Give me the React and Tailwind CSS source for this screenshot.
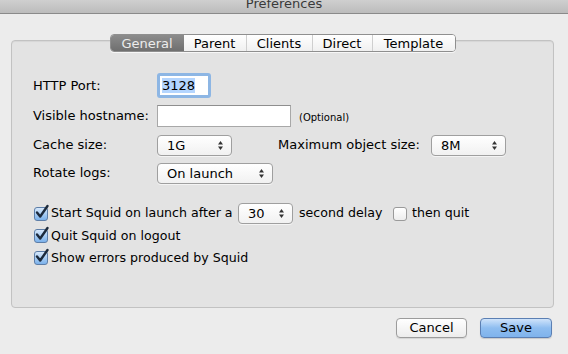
import React from 'react';

const font = { fontFamily: '"DejaVu Sans", "Liberation Sans", sans-serif' };

const Arrows = () => (
  <svg width="7" height="11" viewBox="0 0 7 11" className="shrink-0">
    <path d="M3.5 1 L6 4.5 L1 4.5 Z" fill="#333" />
    <path d="M3.5 10 L6 6.5 L1 6.5 Z" fill="#333" />
  </svg>
);

// popup button
const Popup = ({ value, width }) => (
  <div
    className={`flex items-center justify-between h-[21px] pl-[9px] pr-[7px] rounded-[4px] border border-[#9f9f9f] bg-gradient-to-b from-white to-[#f1f1f1] shadow-[0_1px_0_rgba(255,255,255,0.6)] ${width}`}
  >
    <span className="text-[13px] leading-none text-black">{value}</span>
    <Arrows />
  </div>
);

const Check = ({ checked }) => (
  <div className="relative w-[14px] h-[14px] shrink-0">
    {checked ? (
      <div className="w-[14px] h-[14px] rounded-[3px] border border-[#5d7ea8] bg-gradient-to-b from-[#d6e8fb] to-[#7bb1ea]" />
    ) : (
      <div className="w-[14px] h-[14px] rounded-[3px] border border-[#9a9a9a] bg-gradient-to-b from-white to-[#ededed]" />
    )}
    {checked && (
      <svg width="16" height="16" viewBox="0 0 16 16" className="absolute left-[0px] top-[-3px]">
        <path d="M3 8.5 L6.2 12.5 L13.5 2" fill="none" stroke="#1c2a3c" strokeWidth="2.4" strokeLinecap="round" strokeLinejoin="round" />
      </svg>
    )}
  </div>
);

const tabs = ['General', 'Parent', 'Clients', 'Direct', 'Template'];
const tabWidths = ['w-[73px]', 'w-[62px]', 'w-[66px]', 'w-[60px]', 'w-[83px]'];

export default function App() {
  return (
    <div className="w-[568px] h-[354px] bg-[#ececec] overflow-hidden text-black" style={font}>
      {/* title bar */}
      <div className="h-[14px] overflow-hidden border-b border-[#8a8a8a] bg-gradient-to-b from-[#cfcfcf] to-[#bcbcbc]">
        <div className="-mt-[4px] text-center text-[13px] leading-[16px] text-[#3a3a3a]">Preferences</div>
      </div>

      {/* group box */}
      <div className="ml-[11px] mr-[14px] mt-[26px] h-[268px] rounded-[4px] border border-[#c2c2c2] bg-[#e3e3e3] shadow-[inset_0_1px_1px_rgba(0,0,0,0.06)]">
        <div className="flex justify-center -mt-[7px]">
          <div className="flex h-[18px] rounded-[4px] border border-[#8f8f8f] bg-white overflow-hidden shadow-[0_1px_0_rgba(255,255,255,0.7)]">
            {tabs.map((t, i) => (
              <div
                key={t}
                className={`flex items-center justify-center text-[13px] leading-none ${tabWidths[i]} ${
                  i === 0
                    ? 'bg-gradient-to-b from-[#8c8c8c] to-[#6f6f6f] text-[#ececec]'
                    : 'bg-gradient-to-b from-white to-[#f0f0f0]'
                } ${i > 1 ? 'border-l border-[#cfcfcf]' : ''}`}
              >
                {t}
              </div>
            ))}
          </div>
        </div>

        <div className="pl-[21px] pt-[20px]">
          <div className="flex items-center h-[27px]">
            <span className="w-[124px] text-[13px]">HTTP Port:</span>
            <div className="flex items-center h-[25px] w-[54px] rounded-[3px] border-[3px] border-[#8db6e4] bg-white pl-[2px]">
              <span className="bg-[#b4d5fe] text-[13px] leading-[15px]">3128</span>
            </div>
          </div>

          <div className="flex items-center h-[30px] mt-[2px]">
            <span className="w-[124px] text-[13px]">Visible hostname:</span>
            <div className="h-[22px] w-[134px] border border-[#a8a8a8] border-t-[#8e8e8e] bg-white" />
            <span className="ml-[8px] text-[10px] mt-[2px]">(Optional)</span>
          </div>

          <div className="flex items-center h-[28px]">
            <span className="w-[124px] text-[13px]">Cache size:</span>
            <Popup value="1G" width="w-[75px]" />
            <span className="ml-[46px] w-[153px] text-[13px]">Maximum object size:</span>
            <Popup value="8M" width="w-[75px]" />
          </div>

          <div className="flex items-center h-[28px]">
            <span className="w-[124px] text-[13px]">Rotate logs:</span>
            <Popup value="On launch" width="w-[116px]" />
          </div>

          <div className="flex flex-col mt-[15px] pl-[1px] text-[12.6px]">
            <div className="flex items-center h-[23px]">
              <Check checked />
              <span className="ml-[3px] w-[180px] whitespace-nowrap">Start Squid on launch after a</span>
              <div className="ml-[7px]">
                <Popup value="30" width="w-[55px]" />
              </div>
              <span className="ml-[6px] w-[82px] whitespace-nowrap">second delay</span>
              <div className="ml-[12px]"><Check /></div>
              <span className="ml-[5px] whitespace-nowrap">then quit</span>
            </div>
            <div className="flex items-center h-[22px]">
              <Check checked />
              <span className="ml-[3px]">Quit Squid on logout</span>
            </div>
            <div className="flex items-center h-[22px]">
              <Check checked />
              <span className="ml-[3px]">Show errors produced by Squid</span>
            </div>
          </div>
        </div>
      </div>

      {/* buttons */}
      <div className="flex justify-end gap-[13px] mr-[16px] mt-[10px]">
        <div className="flex items-center justify-center w-[71px] h-[20px] rounded-[4px] border border-[#9c9c9c] bg-gradient-to-b from-white to-[#ececec] text-[13px] shadow-[0_1px_1px_rgba(0,0,0,0.1)]">
          Cancel
        </div>
        <div className="flex items-center justify-center w-[72px] h-[20px] rounded-[4px] border border-[#5b7fb3] bg-gradient-to-b from-[#cfe3fa] via-[#8ebdf0] to-[#7fb3ec] text-[13px] shadow-[0_1px_1px_rgba(0,0,0,0.15)]">
          Save
        </div>
      </div>
    </div>
  );
}
